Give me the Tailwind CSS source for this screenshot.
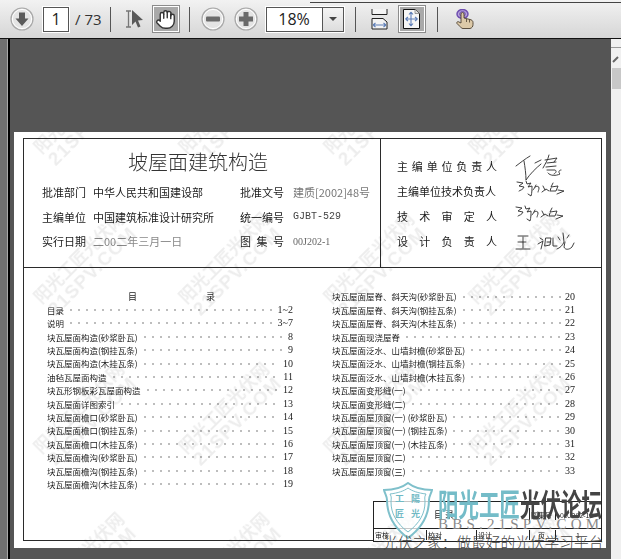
<!DOCTYPE html>
<html lang="en">
<head>
  <meta charset="UTF-8" />
  <meta name="viewport" content="width=device-width, initial-scale=1.0" />
  <title>坡屋面建筑构造 - PDF</title>
  <script src="https://cdn.jsdelivr.net/npm/@tailwindcss/browser@4"></script>
</head>
<body class="w-[621px] h-[559px] overflow-hidden bg-[#555555] font-['Noto_Sans_CJK_SC',sans-serif]">

  <!-- toolbar -->
  <div class="relative flex items-center h-[39px] pl-[10px] bg-gradient-to-b from-[#f2f2f2] to-[#d6d6d6] border-b border-b-[#111111] font-['Open_Sans',sans-serif]">
    <div class="absolute left-[310px] right-0 top-[2px] h-px bg-[#444444]"></div>

    <svg class="w-[24px] h-[24px]" viewBox="0 0 24 24">
      <circle cx="12" cy="12" r="11" fill="#e4e4e4" stroke="#a8a8a8" stroke-width="1.2"/>
      <circle cx="12" cy="12" r="9.6" fill="none" stroke="#ffffff"/>
      <path d="M9 5.5h6v6h3.5L12 19l-6.500-7.500H9z" fill="#5a5a5a"/>
    </svg>
    <div class="w-[26px] h-[25px] ml-[9px] bg-white border border-[#555555] outline outline-white text-center text-[16px] leading-[23px] text-[#222222]">1</div>
    <div class="ml-[6px] text-[15px] text-[#333333]">/ 73</div>
    <div class="w-px h-[25px] ml-[8px] bg-[#555555]"></div>

    <svg class="w-[20px] h-[20px] ml-[14px]" viewBox="0 0 20 20">
      <path d="M1 2h5M1 18h5M3.500 2v16" fill="none" stroke="#777777" stroke-width="1.300"/>
      <path d="M7 1l11 10-5 .5 2.500 6-2.500 1-2.500-6L7 16z" fill="#5a5a5a"/>
    </svg>
    <div class="flex items-center justify-center w-[26px] h-[26px] ml-[8px] bg-[#a9a9a9] border border-[#ffffff] outline outline-[#8c8c8c]">
      <svg class="w-[21px] h-[21px]" viewBox="0 0 24 24" fill="#ffffff" stroke="#333333" stroke-width="1.600" stroke-linecap="round" stroke-linejoin="round">
        <path d="M18 8a2 2 0 1 1 4 0v6a8 8 0 0 1-8 8h-2c-2.800 0-4.500-.86-5.990-2.340l-3.600-3.600a2 2 0 0 1 2.830-2.820L6 14V6a2 2 0 0 1 4 0V4a2 2 0 0 1 4 0v0a2 2 0 0 1 4 2z"/>
        <path d="M18 6v5M14 4v6M10 6v4.500"/>
      </svg>
    </div>
    <div class="w-px h-[25px] ml-[10px] bg-[#555555]"></div>

    <svg class="w-[24px] h-[24px] ml-[11px]" viewBox="0 0 24 24">
      <circle cx="12" cy="12" r="11" fill="#e4e4e4" stroke="#a8a8a8" stroke-width="1.200"/>
      <circle cx="12" cy="12" r="9.600" fill="none" stroke="#ffffff"/>
      <rect x="5" y="9.500" width="14" height="5" rx="1" fill="#6a6a6a"/>
    </svg>
    <svg class="w-[24px] h-[24px] ml-[9px]" viewBox="0 0 24 24">
      <circle cx="12" cy="12" r="11" fill="#e4e4e4" stroke="#a8a8a8" stroke-width="1.200"/>
      <circle cx="12" cy="12" r="9.600" fill="none" stroke="#ffffff"/>
      <path d="M9.500 5h5v4.500H19v5h-4.500V19h-5v-4.500H5v-5h4.500z" fill="#6a6a6a"/>
    </svg>
    <div class="flex w-[78px] h-[25px] ml-[8px] border border-[#555555] outline outline-white">
      <div class="w-[55px] bg-white text-center text-[16px] leading-[23px] text-[#222222]">18%</div>
      <div class="flex flex-1 items-center justify-center border-l border-l-[#555555] bg-gradient-to-b from-[#f4f4f4] to-[#dddddd]">
        <div class="w-0 h-0 border-x-[4px] border-x-transparent border-t-[4px] border-t-[#444444]"></div>
      </div>
    </div>
    <div class="w-px h-[25px] ml-[11px] bg-[#555555]"></div>

    <svg class="w-[17px] h-[21px] ml-[15px]" viewBox="0 0 17 21">
      <path d="M1 0v5.500h15V0" fill="#f4f4f4" stroke="#222222"/>
      <path d="M1 9.500h11l4 3.500v7H1z" fill="#f4f4f4" stroke="#222222"/>
      <path d="M2 16h13M2 16l2.500-2M2 16l2.500 2M15 16l-2.500-2M15 16l-2.500 2" fill="none" stroke="#5f7fb8" stroke-width="1.100"/>
    </svg>
    <div class="flex items-center justify-center w-[26px] h-[26px] ml-[11px] bg-[#a9a9a9] border border-white outline outline-[#8c8c8c]">
      <svg class="w-[17px] h-[20px]" viewBox="0 0 17 20">
        <path d="M.5.500h11.500l4.500 4v15H.5z" fill="#f6f6f6" stroke="#111111"/>
        <path d="M12 .5v4h4.500" fill="#dddddd" stroke="#777777" stroke-width=".7"/>
        <path d="M8 3v14M2.500 10h12M8 3L6 5.500M8 3l2 2.500M8 17l-2-2.500M8 17l2-2.500M2.500 10L5 8M2.500 10L5 12M14.500 10L12 8M14.500 10L12 12" fill="none" stroke="#5f7fb8" stroke-width="1.100"/>
      </svg>
    </div>
    <div class="w-px h-[25px] ml-[12px] bg-[#555555]"></div>

    <svg class="w-[18px] h-[20px] ml-[18px]" viewBox="0 0 18 20">
      <ellipse cx="6.500" cy="5" rx="5.500" ry="4.500" fill="#b9a5dc" stroke="#6f4fb0" stroke-width="1.500"/>
      <ellipse cx="6.500" cy="5" rx="2.800" ry="2.500" fill="none" stroke="#6f4fb0"/>
      <path d="M5 14V5a1.500 1.500 0 0 1 3 0v4l6 1.500c1.500.4 3 1 3 3v2c0 2-1 3.500-3 4H7c-1.500 0-2-1-3-2l-3-3c-.8-1 .5-2.500 2-1.500z" fill="#dcc9a8" stroke="#4c4030" stroke-width=".9"/>
      <path d="M10.500 10v3M13.500 10.500v3" stroke="#4c4030" stroke-width=".8"/>
    </svg>
  </div>

  <div class="flex h-[520px]">
    <!-- nav panel strip -->
    <div class="w-[10px] bg-[#707070] border-r-2 border-r-black shadow-[inset_-1px_0_0_#a8a8a8]"></div>

    <!-- document -->
    <div class="flex-1 pl-[4px] pt-[93px]">
      <div class="relative w-[592px] h-[416px] pl-[9px] pt-[6px] bg-white text-[#1c1c1c] overflow-hidden">
        <div class="flex flex-col w-[579px] h-[403px] border-[1.5px] border-[#2b2b2b] blur-[0.3px]">

          <div class="flex h-[129px] border-b-[1.5px] border-b-[#2b2b2b]">
            <div class="w-[357px] pl-[18px] border-r-[1.5px] border-r-[#2b2b2b]">
              <div class="pl-[86px] pt-[9px] text-[20px] leading-[27px] font-light text-[#333333]">坡屋面建筑构造</div>
              <div class="flex items-center h-[24.500px] mt-[5px] text-[11px]">
                <span class="w-[51px]">批准部门</span><span class="w-[147px]">中华人民共和国建设部</span><span class="w-[53px]">批准文号</span><span class="text-[#777777]">建质[2002]48号</span>
              </div>
              <div class="flex items-center h-[24.500px] text-[11px]">
                <span class="w-[51px]">主编单位</span><span class="w-[147px]">中国建筑标准设计研究所</span><span class="w-[53px]">统一编号</span><span class="text-[#444444] font-['Liberation_Mono',monospace] text-[10px]">GJBT-529</span>
              </div>
              <div class="flex items-center h-[24.500px] text-[11px]">
                <span class="w-[51px]">实行日期</span><span class="w-[147px] text-[#888888]">二00二年三月一日</span>
                <span class="flex justify-between w-[44px] mr-[9px]"><span>图</span><span>集</span><span>号</span></span><span class="text-[#666666] font-['Liberation_Serif',serif] text-[10px]">00J202-1</span>
              </div>
            </div>

            <div class="flex-1 relative pl-[16px] pt-[15px] text-[11px]">
              <div class="flex justify-between w-[100px] h-[25px] items-center"><span>主</span><span>编</span><span>单</span><span>位</span><span>负</span><span>责</span><span>人</span></div>
              <div class="flex justify-between w-[100px] h-[25px] items-center"><span>主编单位技术负责人</span></div>
              <div class="flex justify-between w-[100px] h-[24.500px] items-center"><span>技</span><span>术</span><span>审</span><span>定</span><span>人</span></div>
              <div class="flex justify-between w-[100px] h-[24.500px] items-center"><span>设</span><span>计</span><span>负</span><span>责</span><span>人</span></div>

              <!-- signatures, scribbled over the sheet -->
              <svg class="absolute left-[134px] top-[15px] w-[62px] h-[100px]" viewBox="0 0 62 100" fill="none" stroke="#2a2a2a" stroke-width=".9" stroke-linecap="round">
                <path d="M1 12C5 9 10 5 15 2M9 7c1 6 2 13 2 19 4-6 10-12 15-16M20 9l6-3M34 1c-1 5-4 9-6 13M30 6l12-2-3 4M32 9l9-1M31 13l10-1M32 16h8c2 1 1 3-1 4M33 19c2 3 8 3 12 1-2-2-1-4 1-4"/>
                <path d="M2 28l6 1-4 3 5 1c-1 3-4 3-5 4M11 27l1 3 4-1-3 4 4-1c0 3 0 7-1 10l-3-2M21 31c-1 2-2 4-3 5M20 33c2-1 4-1 4 1s-1 3-1 4M28 32l2 4M27 38l4-3 3 2M38 29l-2 4 7-1-2 5h-6l1-3M43 36l6 1-7 3"/>
                <path d="M1 53l6 1-4 3 5 1c-1 3-4 3-5 4M10 52l1 3 4-1-3 4 4-1c0 3 0 7-1 10l-3-2M20 56c-1 2-2 4-3 5M19 58c2-1 4-1 4 1s-1 3-1 4M27 57l2 4M26 63l4-3 3 2M37 54l-2 4 7-1-2 5h-6l1-3M42 61l6 1-7 3"/>
                <path d="M3 82h10M8 83v11M3 88h8M1 95h14M25 84l3 2M23 90l5-3-2 8M31 84l5 0-1 7-5 1zM32 88h3M38 84v8h4M48 79l1 9c-1 3-4 6-7 7M43 83l2 3M54 81l-2 3M50 88l-1 5c1 3 5 3 8 0l2-4"/>
              </svg>
            </div>
          </div>

          <div id="toc" class="relative grid grid-cols-[285px_1fr] flex-1 pl-[23px] pt-[22px] text-[8.500px]">
            <div class="w-[246px]">
              <div class="flex h-[13.400px] items-center text-[9px]"><span class="ml-[81px]">目</span><span class="ml-[69px]">录</span></div>
              <div id="toc-left"></div>
            </div>
            <div id="toc-right" class="w-[243px]"></div>
          </div>
        </div>

        <!-- title block bottom right -->
        <div class="absolute left-[359px] top-[369px] w-[229px] h-[41px] bg-white border-[1.5px] border-[#222222] text-[7px] blur-[0.3px]">
          <div class="flex items-center h-[27px] border-b border-b-[#222222]">
            <span class="w-[156px] pl-[60px] text-[9px] border-r border-r-[#222222]">目 录</span><span class="w-[26px] pl-px border-r border-r-[#222222]">图集号</span><span class="ml-[4px]">00J202-1</span>
          </div>
          <div class="flex items-center h-[12px]">
            <span class="w-[53px] pl-px border-r border-r-[#222222]">审核</span><span class="w-[50px] pl-px border-r border-r-[#222222]">校对</span><span class="w-[53px] pl-px border-r border-r-[#222222]">设计</span><span class="w-[26px] pl-[8px] border-r border-r-[#222222]">页</span><span class="pl-[20px]">1</span>
          </div>
        </div>

        <!-- site watermark, clipped by the sheet -->
        <div id="marks" class="absolute inset-0 pointer-events-none"></div>
      </div>
    </div>

    <!-- scrollbar -->
    <div class="w-[10px] bg-[#f0f0f0]">
      <div class="h-[9px] border-b border-b-[#999999]"></div>
      <svg class="w-[7px] h-[8px] mt-[7px] ml-px" viewBox="0 0 7 8"><path d="M1 7l5-5" stroke="#666666" stroke-width="2"/></svg>
      <div class="h-[21px] mt-[5px] ml-[1px] bg-[#c8c8c8]"></div>
    </div>
  </div>

  <!-- forum stamp over the page corner -->
  <svg class="absolute left-[383px] top-[482px] w-[50px] h-[57px]" viewBox="0 0 50 57">
    <path d="M25 1c5 4 12 7 24 7-1 4-3 6-3 10 0 14-6 27-21 38C10 45 4 32 4 18 4 14 2 12 1 8c12 0 19-3 24-7z" fill="#ffffff" fill-opacity=".75" stroke="#7fc0cb" stroke-width="2"/>
    <path d="M25 6c4 3 10 5 18 6-2 3-1 5-1 8 0 11-5 21-17 30C13 41 8 31 8 20c0-3 1-5-1-8 8-1 14-3 18-6z" fill="none" stroke="#7fc0cb"/>
  </svg>
  <div class="absolute left-[395px] top-[491px] text-[9px] leading-[15px] font-bold tracking-[7px] text-[#6fb9c4] whitespace-nowrap">工陽<br>匠光</div>
  <div class="absolute left-[438px] top-[487px] origin-top-left scale-y-[1.5] text-[20.500px] leading-[21px] font-bold text-[#74bcc8] whitespace-nowrap">阳光工匠<span class="text-[#444444]">光伏论坛</span></div>
  <div class="absolute left-[438px] top-[516px] font-['Liberation_Serif',serif] text-[15px] leading-[17px] tracking-[4.200px] text-[#8a8a8a] whitespace-nowrap">BBS.21SPV.COM</div>
  <div class="absolute left-[383px] top-[532px] text-[14.700px] leading-[20px] font-light text-[#444444] whitespace-nowrap">光伏之家：做最好的光伏学习平台</div>

  <script>
    const tocLeft = [
      ["目录", "1~2"], ["说明", "3~7"], ["块瓦屋面构造(砂浆卧瓦)", "8"], ["块瓦屋面构造(钢挂瓦条)", "9"],
      ["块瓦屋面构造(木挂瓦条)", "10"], ["油毡瓦屋面构造", "11"], ["块瓦形钢板彩瓦屋面构造", "12"], ["块瓦屋面详图索引", "13"],
      ["块瓦屋面檐口(砂浆卧瓦)", "14"], ["块瓦屋面檐口(钢挂瓦条)", "15"], ["块瓦屋面檐口(木挂瓦条)", "16"],
      ["块瓦屋面檐沟(砂浆卧瓦)", "17"], ["块瓦屋面檐沟(钢挂瓦条)", "18"], ["块瓦屋面檐沟(木挂瓦条)", "19"]
    ];
    const tocRight = [
      ["块瓦屋面屋脊、斜天沟(砂浆卧瓦)", "20"], ["块瓦屋面屋脊、斜天沟(钢挂瓦条)", "21"], ["块瓦屋面屋脊、斜天沟(木挂瓦条)", "22"],
      ["块瓦屋面现浇屋脊", "23"], ["块瓦屋面泛水、山墙封檐(砂浆卧瓦)", "24"], ["块瓦屋面泛水、山墙封檐(钢挂瓦条)", "25"],
      ["块瓦屋面泛水、山墙封檐(木挂瓦条)", "26"], ["块瓦屋面变形缝(一)", "27"], ["块瓦屋面变形缝(二)", "28"],
      ["块瓦屋面屋顶窗(一) (砂浆卧瓦)", "29"], ["块瓦屋面屋顶窗(一) (钢挂瓦条)", "30"], ["块瓦屋面屋顶窗(一) (木挂瓦条)", "31"],
      ["块瓦屋面屋顶窗(二)", "32"], ["块瓦屋面屋顶窗(三)", "33"]
    ];

    function tocRows(rows) {
      return rows.map(([name, page]) => `
        <div class="flex items-center h-[13.400px] whitespace-nowrap">
          <span class="leading-none">${name}</span>
          <span class="flex-1 h-[4px] mx-[3px] bg-[radial-gradient(circle,#999999_0.6px,transparent_0.9px)] bg-[length:8px_4px] bg-repeat-x"></span>
          <span class="leading-none font-['Liberation_Serif',serif] text-[10px]">${page}</span>
        </div>`).join("");
    }
    document.getElementById("toc-left").innerHTML = tocRows(tocLeft);
    document.getElementById("toc-right").innerHTML = tocRows(tocRight);

    // diagonal site watermark repeated across the sheet, coords relative to the sheet
    const centers = [];
    for (let row = 0; row < 4; row++) {
      for (let col = 0; col < 4; col++) centers.push([71 + 145 * col, -18 + 150 * row]);
    }
    document.getElementById("marks").innerHTML = centers.map(([x, y]) => `
      <div class="absolute -rotate-45 text-center font-bold text-[17px] leading-[19px] text-black/[0.07] whitespace-nowrap -translate-x-1/2 -translate-y-1/2 blur-[0.4px]" style="left:${x}px;top:${y}px">
        阳光工匠光伏网<br><span class="font-['Liberation_Sans',sans-serif] text-[19px] tracking-[1px]">21SPV.COM</span>
      </div>`).join("");
  </script>
</body>
</html>
